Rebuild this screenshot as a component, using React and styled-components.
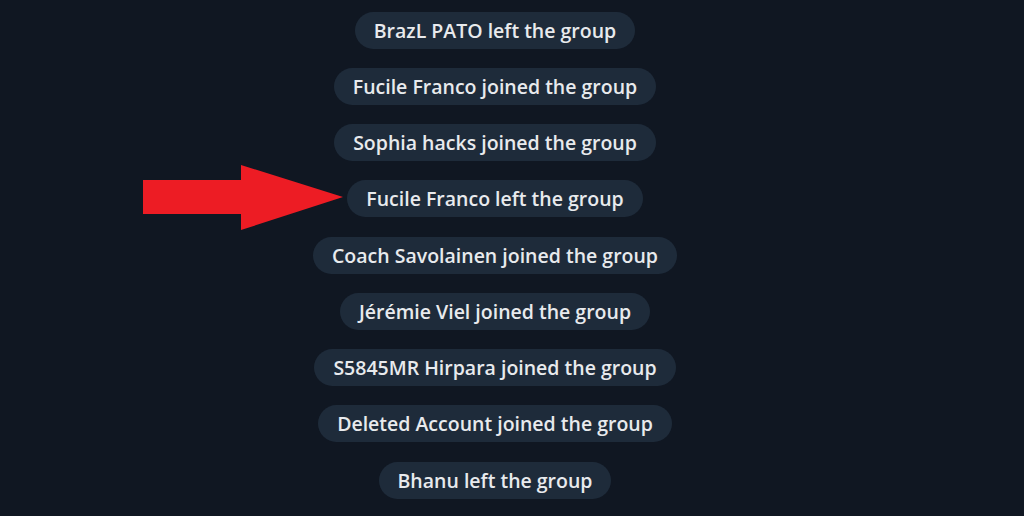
import React from "react";
import styled, { createGlobalStyle } from "styled-components";

const events = [
  "BrazL PATO left the group",
  "Fucile Franco joined the group",
  "Sophia hacks joined the group",
  "Fucile Franco left the group",
  "Coach Savolainen joined the group",
  "Jérémie Viel joined the group",
  "S5845MR Hirpara joined the group",
  "Deleted Account joined the group",
  "Bhanu left the group",
];

const GlobalStyle = createGlobalStyle`
  html, body {
    margin: 0;
    padding: 0;
    background: #101722;
  }
`;

const Page = styled.div`
  position: relative;
  width: 1024px;
  height: 516px;
  overflow: hidden;
  background: #101722;
  font-family: "Open Sans", "Noto Sans", sans-serif;
`;

const Feed = styled.div`
  display: flex;
  flex-direction: column;
  align-items: center;
  gap: 19.25px;
  padding: 11.5px 34px 0 0;
`;

const ServiceMessage = styled.div`
  height: 37px;
  padding: 0 19px;
  display: flex;
  align-items: center;
  border-radius: 19px;
  background: #1e2b3a;
  color: #e8eaed;
  font-size: 19.5px;
  font-weight: 600;
  white-space: nowrap;
`;

const Arrow = styled.svg`
  position: absolute;
  left: 143px;
  top: 165px;
`;

const App = () => {
  return (
    <Page>
      <GlobalStyle />
      <Feed>
        {events.map((text) => (
          <ServiceMessage key={text}>{text}</ServiceMessage>
        ))}
      </Feed>
      {/* red pointer to the highlighted message */}
      <Arrow width="201" height="66" viewBox="0 0 201 66">
        <polygon
          points="0,15 98,15 98,0 200,32 98,65 98,49 0,49"
          fill="#ed1c24"
        />
      </Arrow>
    </Page>
  );
};

export default App;
